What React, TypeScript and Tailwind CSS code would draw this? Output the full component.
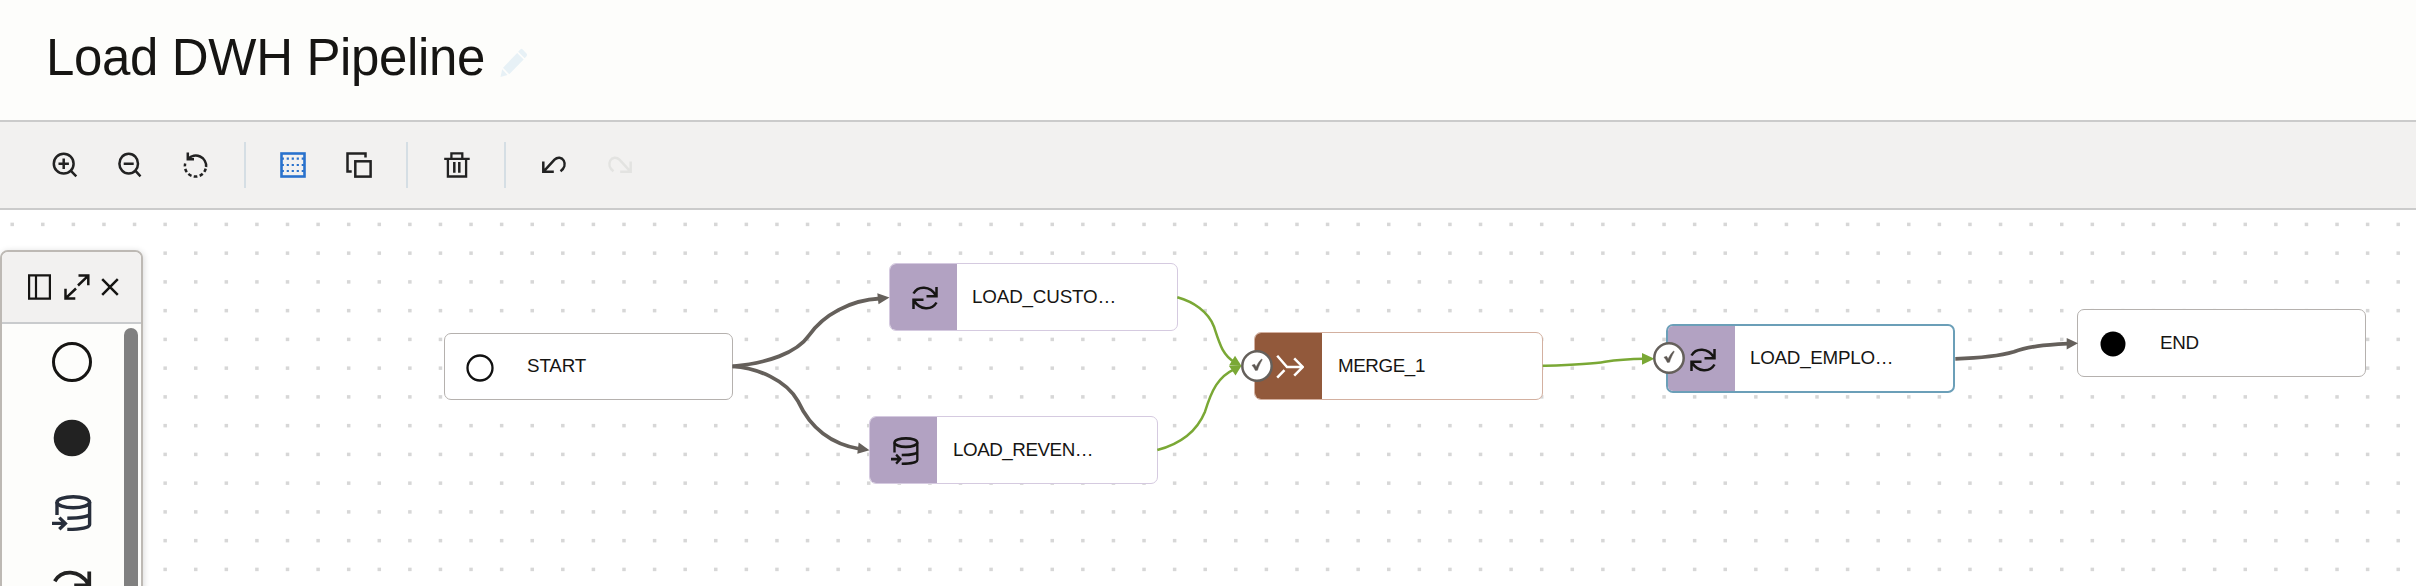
import React from "react";

const CANVAS_TOP = 210;
const range = (n: number) => Array.from({ length: n }, (_, i) => i);

function Dots() {
  return (
    <svg className="absolute left-0 top-0" width="2416" height="376" viewBox="0 210 2416 376" fill="#d7d7d7">
      {range(13).map((r) =>
        range(79).map((c) => (
          <rect key={`${r}-${c}`} x={12.2 + c * 30.59 - 1.75} y={224.4 + r * 28.75 - 1.75} width="3.5" height="3.5" />
        ))
      )}
    </svg>
  );
}

/* Toolbar icons, drawn on a 26px grid */

function ToolIcon({ children, className = "", w = 2.5 }: { children: React.ReactNode; className?: string; w?: number }) {
  return (
    <svg viewBox="0 0 26 26" className={`size-[26px] shrink-0 ${className}`} fill="none" stroke="currentColor" strokeWidth={w}>
      {children}
    </svg>
  );
}

const Divider = ({ className }: { className: string }) => <div className={`h-[46px] w-0.5 shrink-0 bg-[#d5dee4] ${className}`} />;

function Toolbar() {
  return (
    <div className="flex h-[90px] shrink-0 items-center border-y-2 border-[#cbcbcb] bg-[#f2f1f0] pl-[52px] text-[#222]">
      <ToolIcon>
        <circle cx="11.700" cy="11.700" r="9.900" />
        <path d="M18.700 18.700l5.600 5.600M6.500 11.700h10.400M11.700 6.500v10.400" />
      </ToolIcon>
      <ToolIcon className="ml-10">
        <ellipse cx="10.700" cy="11.700" rx="9.300" ry="9.900" />
        <path d="M17.300 18.700l5.200 5.600M5.700 11.700h10" />
      </ToolIcon>
      <ToolIcon className="ml-[39px]">
        <path d="M4.800 0.500v6.700h6.200M5.200 6.800A10.400 10.400 0 0 1 23.100 15" />
        <path d="M22.700 16.600A10.400 10.400 0 0 1 2.200 11.500" strokeDasharray="3.600 2.400" />
      </ToolIcon>
      <Divider className="ml-[35px]" />
      <ToolIcon className="ml-[34px] text-[#2a72cd]" w={2.6}>
        <rect x="1.500" y="1.500" width="23" height="23" />
        <g strokeWidth="2.200" strokeDasharray="2.200 2.800">
          <path d="M2 6.700h22M2 13h22M2 19h22" strokeDashoffset="0.300" />
        </g>
      </ToolIcon>
      <ToolIcon className="ml-10">
        <path d="M19.500 5.500V1.500H1.500v18h4.200" />
        <rect x="9.300" y="9.300" width="15.300" height="15.300" />
      </ToolIcon>
      <Divider className="ml-[34px]" />
      <ToolIcon className="ml-9" w={2.3}>
        <path d="M0.200 6.900h25.500M7.400 6.500V1.400h10.900v5.100M3.900 7v17.500h18.200V7" />
        <path d="M10.300 10v10.700M15.300 10v10.700" strokeWidth="2.500" />
      </ToolIcon>
      <Divider className="ml-[34px]" />
      <ToolIcon className="ml-[35px]">
        <path d="M2.300 9.500v10.300h10.500M2.500 19.600L13.500 7.700c3-3 7.300-2.500 9.200 0.800 1.900 3.400 0.800 7.800-3.200 10.700" />
      </ToolIcon>
      <ToolIcon className="ml-10 text-[#e3e3e1]">
        <path d="M23.700 9.500v10.300h-10.500M23.500 19.600L12.500 7.700c-3-3-7.300-2.500-9.200 0.800-1.900 3.400-0.800 7.800 3.200 10.700" />
      </ToolIcon>
    </div>
  );
}

/* Operator icons */

const Sync = ({ className = "size-7" }: { className?: string }) => (
  <svg viewBox="0 0 28 28" className={className} fill="none" stroke="currentColor" strokeWidth="2.500">
    <path d="M2.500 9.500C7 1.500 19 1.500 25 11.500M25.500 3v9.200h-10M25.500 18.500C21 26.500 9 26.500 3 16.500M2.500 25v-9.200h10" />
  </svg>
);

const Database = ({ className }: { className: string }) => (
  <svg viewBox="0 0 40 36" preserveAspectRatio="none" className={className} fill="none" stroke="currentColor" strokeWidth="3.400">
    <ellipse cx="21.300" cy="7.200" rx="16.300" ry="5.500" />
    <path d="M5 7v13M37.600 7v22.500c0 3.200-9 4.900-22.300 4.900M37.600 18.500c0 3-9 4.700-22.300 4.700M0 28.400h13M7.300 22.600l6 5.800-6 5.800" />
  </svg>
);

const Merge = () => (
  <svg viewBox="0 0 28 28" className="size-7" fill="none" stroke="currentColor" strokeWidth="2.500">
    <path d="M1.200 2.700L11 14h15.500M18.200 5.300L26.700 14l-8.500 8.700M1.200 24.700l7.300-7.500" />
  </svg>
);

const Circle = ({ filled = false }: { filled?: boolean }) => (
  <svg viewBox="0 0 28 28" className="size-7">
    {filled ? <circle cx="14" cy="14" r="12.500" /> : <circle cx="14" cy="14" r="12.500" fill="none" stroke="#111" strokeWidth="2.300" />}
  </svg>
);

/* Diagram */

type NodeProps = {
  x: number;
  y: number;
  h: number;
  label: string;
  icon: React.ReactNode;
  tone?: string;
  border: string;
  labelClass: string;
};

function Node({ x, y, h, label, icon, tone = "", border, labelClass }: NodeProps) {
  return (
    <div
      className={`absolute flex w-[289px] overflow-hidden rounded-[7px] bg-white ${border}`}
      style={{ left: x, top: y - CANVAS_TOP, height: h }}
    >
      <div className={`flex w-[67px] shrink-0 items-center justify-center pl-0.5 pt-0.5 ${tone}`}>{icon}</div>
      <div className={`flex items-center whitespace-nowrap text-[18.800px] ${labelClass}`}>{label}</div>
    </div>
  );
}

function Check({ x, y }: { x: number; y: number }) {
  return (
    <svg className="absolute size-8" style={{ left: x - 16, top: y - 16 - CANVAS_TOP }} viewBox="-16 -16 32 32">
      <circle r="14.700" fill="#fff" stroke="#65605b" strokeWidth="2.500" />
      <path
        d="M-5-0.800L-2.400-1.700-0.900 1C0.600-2.200 2.400-5.200 4.700-7L5.200-6.200C3.200-3 1.500 0.800 0.500 4.200L-1.600 4.400C-2.600 2.400-3.700 0.600-5-0.800z"
        fill="#5c5752"
        stroke="#5c5752"
        strokeWidth="0.500"
      />
    </svg>
  );
}

function Edges() {
  return (
    <svg className="absolute left-0 top-0" width="2416" height="376" viewBox="0 210 2416 376" fill="none">
      <g stroke="#65605b" strokeWidth="3.800">
        <path d="M732.500 366.300C766.700 363.300 796.700 353.300 809.300 335C823.300 315 850 300 880 298.500" />
        <path d="M732.500 366.300C756.700 367.700 786.700 380 798.300 401.700C808.300 423.300 826.700 443.300 860 449" />
        <path d="M1955.300 358.800C1975 358.200 1998 356.500 2014 351.800C2028 346.200 2045 345 2068 343.700" />
      </g>
      <g fill="#65605b">
        <path d="M889.500 297.600L877.300 293.200L878.500 304.300z" />
        <path d="M869.500 450.300L858.700 442.600L857.300 453.800z" />
        <path d="M2078 343.300L2066.700 338L2066.700 349.400z" />
      </g>
      <g stroke="#7aa835" strokeWidth="2.500">
        <path d="M1177.300 297.300C1193.300 301.700 1208.300 311.700 1214 326.700C1220 345 1222.700 355 1235 362.500" />
        <path d="M1157.300 450C1180 444 1196.700 431.700 1205 411.700C1211.700 390 1218.300 376.700 1234 369.300" />
        <path d="M1542.700 365.800C1570 365 1590 364.500 1605 361.700C1620 359.500 1635 359 1645 358.800" />
      </g>
      <g fill="#7aa835">
        <path d="M1241.500 366L1235 355.700L1229 365.500z" />
        <path d="M1241.500 365.800L1235.500 375.500L1229 366z" />
        <path d="M1654.500 358.700L1642 353L1642 364.700z" />
      </g>
    </svg>
  );
}

function Palette() {
  return (
    <aside className="absolute left-0 top-10 flex h-[420px] w-[143px] flex-col overflow-hidden rounded-lg border-2 border-[#bdb9b4] bg-[#fdfdfb] shadow-[1px_1px_6px_rgba(0,0,0,0.15)]">
      <div className="flex h-[72px] shrink-0 items-center border-b-2 border-[#c9cbcd] bg-[#f2f1f0] pl-[26px] text-[#161513]">
        <svg viewBox="0 0 23 26" className="h-[26px] w-[23px]" fill="none" stroke="currentColor" strokeWidth="2.200">
          <path d="M1.100 1.300h20.800v23.400H1.100zM8 1.300v23.400" />
        </svg>
        <svg viewBox="0 0 26 26" className="ml-[13px] size-[26px]" fill="none" stroke="currentColor" strokeWidth="2.500">
          <path d="M14.500 1.500h9.800v9.800M24 1.800L14 11.500M1.500 14.700v9.800h9.800M1.800 24.200L12 14.500" />
        </svg>
        <svg viewBox="0 0 18 18" className="ml-[11px] size-[18px]" fill="none" stroke="currentColor" strokeWidth="2.500">
          <path d="M1.200 1.200l15.600 15.600M16.800 1.200l-15.600 15.600" />
        </svg>
      </div>
      <div className="flex shrink-0 justify-between pr-[3px] pt-1">
        <div className="flex w-[122px] flex-col items-center pl-[18px] pt-[14px]">
          <svg viewBox="0 0 40 40" className="size-10" fill="none">
            <circle cx="20" cy="20" r="18.500" stroke="#161513" strokeWidth="3" />
          </svg>
          <svg viewBox="0 0 38 38" className="mt-[37px] size-[38px]">
            <circle cx="19" cy="19" r="18.300" fill="#222" />
          </svg>
          <Database className="mt-[38px] h-9 w-10 text-[#272e3b]" />
          <Sync className="mt-9 size-[42px] text-[#222]" />
        </div>
        <div className="h-[400px] w-[14px] rounded-[7px] bg-[#808080]" />
      </div>
    </aside>
  );
}

export default function App() {
  return (
    <div className="flex h-[586px] w-[2416px] flex-col overflow-hidden bg-white font-['Liberation_Sans',sans-serif] text-[#161513]">
      <header className="flex h-[120px] shrink-0 items-center bg-[#fdfdfb] pb-[4px] pl-[46px]">
        <h1 className="text-[51px] tracking-[-0.350px]">Load DWH Pipeline</h1>
        <svg viewBox="0 0 28 30" className="ml-[15px] mt-[10px] h-[30px] w-7" fill="#e7f1f6">
          <path d="M20.500 1.200Q21.500 0.200 22.500 1.200L26.700 5.700Q27.500 6.800 26.700 7.900L24.700 10.300 18.200 3.700z" />
          <path d="M17.200 4.900L23.700 11.500 9.200 26.300 3 19.700z" />
          <path d="M2.200 21.200L7.500 27.100 0.500 29z" />
        </svg>
      </header>
      <Toolbar />
      <main className="relative grow">
        <Dots />
        <Node x={444} y={333} h={67} label="START" icon={<Circle />} border="border border-[#b5b1ae]" labelClass="pl-[15px] tracking-[-0.150px]" />
        <Node x={889} y={263} h={68} label="LOAD_CUSTO…" icon={<Sync />} tone="bg-[#b2a2c2]" border="border border-[#d5cae0]" labelClass="pl-[15px] tracking-[-0.150px]" />
        <Node x={869} y={416} h={68} label="LOAD_REVEN…" icon={<Database className="h-7 w-7" />} tone="bg-[#b2a2c2]" border="border border-[#d5cae0]" labelClass="pl-4 tracking-[-0.450px]" />
        <Node x={1254} y={332} h={68} label="MERGE_1" icon={<Merge />} tone="bg-[#92593b] text-white" border="border border-[#d3b0a0]" labelClass="pl-4 tracking-[-0.400px]" />
        <Node x={1666} y={324} h={69} label="LOAD_EMPLO…" icon={<Sync />} tone="bg-[#b2a2c2]" border="border-2 border-[#6b9fb8]" labelClass="pl-[15px] tracking-[-0.250px]" />
        <Node x={2077} y={309} h={68} label="END" icon={<Circle filled />} border="border border-[#b5b1ae]" labelClass="pl-[15px] tracking-[-0.300px]" />
        <Edges />
        <Check x={1256.5} y={366} />
        <Check x={1669} y={358.4} />
        <Palette />
      </main>
    </div>
  );
}
